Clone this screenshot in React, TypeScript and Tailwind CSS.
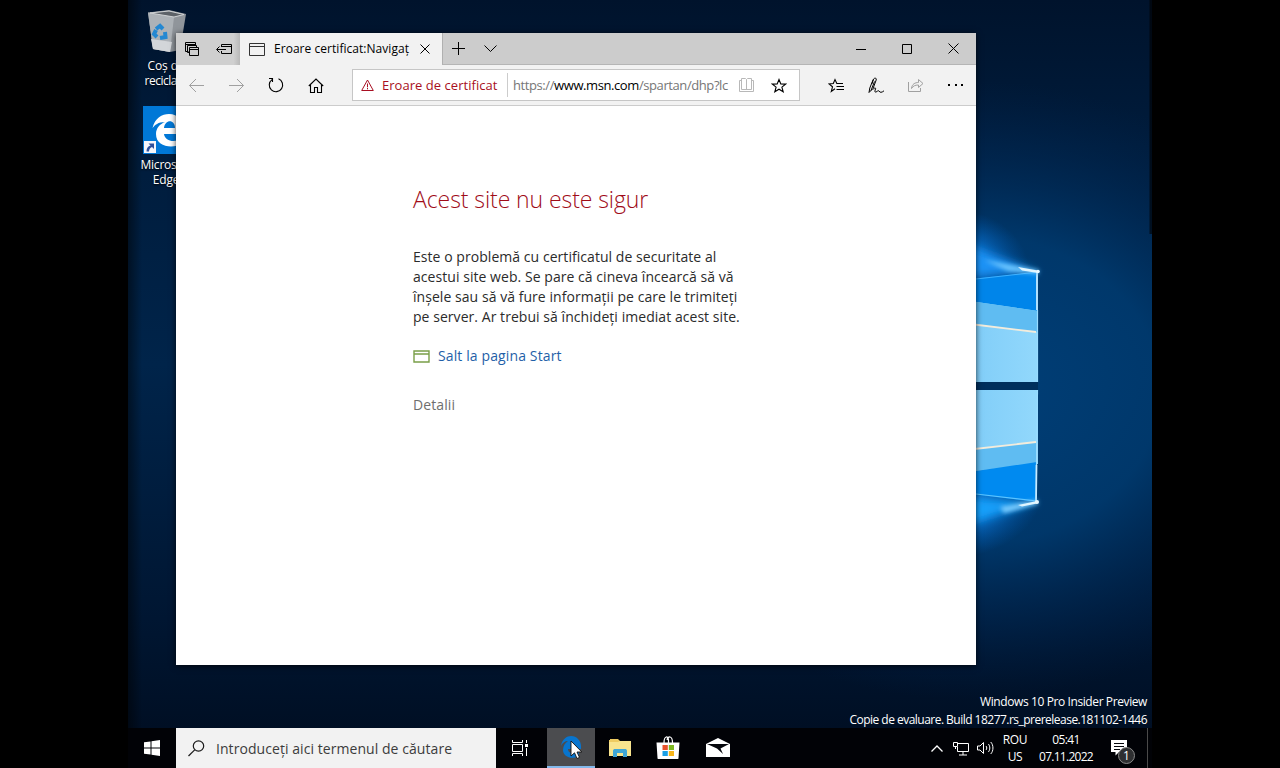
import type { ReactNode } from 'react'

function Wallpaper() {
  return (
    <svg className="absolute inset-0" width="1024" height="728" viewBox="128 0 1024 728">
      <defs>
        <linearGradient id="base" x1="0" y1="0" x2="0" y2="1">
          <stop offset="0" stopColor="#00132c" />
          <stop offset="0.2" stopColor="#001c3c" />
          <stop offset="0.5" stopColor="#00244a" />
          <stop offset="0.85" stopColor="#001632" />
          <stop offset="1" stopColor="#000f24" />
        </linearGradient>
        <radialGradient id="glow" gradientUnits="userSpaceOnUse" cx="0" cy="0" r="1" gradientTransform="translate(970 390) scale(380 310)">
          <stop offset="0" stopColor="#003f78" />
          <stop offset="0.5" stopColor="#003c72" stopOpacity="0.85" />
          <stop offset="1" stopColor="#002450" stopOpacity="0" />
        </radialGradient>
        <radialGradient id="flare">
          <stop offset="0" stopColor="#1c9bff" />
          <stop offset="0.4" stopColor="#0a78dc" stopOpacity="0.65" />
          <stop offset="1" stopColor="#005cb8" stopOpacity="0" />
        </radialGradient>
        <linearGradient id="pane" x1="0" y1="0" x2="1" y2="0">
          <stop offset="0" stopColor="#80cdf8" />
          <stop offset="1" stopColor="#92d8fc" />
        </linearGradient>
        <linearGradient id="left" x1="0" y1="0" x2="1" y2="0">
          <stop offset="0" stopColor="#000" stopOpacity="0.8" />
          <stop offset="1" stopColor="#000" stopOpacity="0" />
        </linearGradient>
        <filter id="soft" x="-50%" y="-50%" width="200%" height="200%"><feGaussianBlur stdDeviation="5" /></filter>
        <filter id="soft2" x="-50%" y="-50%" width="200%" height="200%"><feGaussianBlur stdDeviation="2" /></filter>
      </defs>
      <rect x="128" width="1024" height="728" fill="url(#base)" />
      <rect x="128" width="1024" height="728" fill="url(#glow)" />
      <ellipse cx="968" cy="258" rx="62" ry="46" fill="url(#flare)" transform="rotate(20 968 258)" />
      <ellipse cx="968" cy="510" rx="74" ry="46" fill="url(#flare)" transform="rotate(-15 968 510)" />
      <path d="M960 244 L1038 272 L960 276Z" fill="#1a93f6" filter="url(#soft)" />
      <path d="M960 498 L1037 502 L960 526Z" fill="#15a0fb" filter="url(#soft)" />
      <path d="M970 279 L1038 272 V312 L970 302Z" fill="#0085ea" />
      <path d="M970 301 L1038 311 V382 H970Z" fill="url(#pane)" />
      <path d="M970 301 L1038 311 V332 L970 324Z" fill="#5fbcf2" />
      <path d="M970 324 L1036 332" stroke="#f3ecdc" strokeWidth="1.800" />
      <path d="M970 382 H1038 V390 H970Z" fill="#002f5c" />
      <path d="M970 390 H1038 V464 L970 472Z" fill="url(#pane)" />
      <path d="M970 449 L1036 442 V463 L970 472Z" fill="#5fbcf2" />
      <path d="M970 449.500 L1036 442" stroke="#f3ecdc" strokeWidth="1.800" />
      <path d="M970 472 L1037 462 V502 L970 494Z" fill="#008af0" />
      <path d="M976 494 L1037 501" stroke="#5cc4ff" strokeWidth="1.200" />
      <path d="M976 279 L1038 272" stroke="#3cb0ff" strokeWidth="1" />
      <path d="M1037.500 310 V382" stroke="#9adcff" strokeWidth="1.200" />
      <path d="M1037.500 390 L1036.500 465" stroke="#9adcff" strokeWidth="1.200" />
      <path d="M1037 272 V310 M1036.500 465 L1036 502" stroke="#c4eaff" strokeWidth="1.800" />
      <path d="M984 260 L1039 270 L1038 274 L1008 271Z" fill="#6cc6ff" filter="url(#soft2)" />
      <path d="M1018 267 L1038 270.500 V273 L1022 270.500Z" fill="#e0f5ff" />
      <path d="M1000 507 L1037 500 L1038 504 L1004 513Z" fill="#7accff" filter="url(#soft2)" />
      <path d="M1018 505 L1037 501 V503.500 L1022 506.500Z" fill="#e0f5ff" />
      <circle cx="1038" cy="271.500" r="1.800" fill="#e8f8ff" />
      <circle cx="1037" cy="502" r="2" fill="#e8f8ff" />
      <rect x="128" width="14" height="728" fill="url(#left)" opacity="0.600" />
      <path d="M1151 0 V234" stroke="#000" strokeWidth="3" opacity="0.600" />
    </svg>
  )
}

function Icon({ w, h, className = '', children }: { w: number; h: number; className?: string; children: ReactNode }) {
  return (
    <svg width={w} height={h} viewBox={`0 0 ${w} ${h}`} fill="none" stroke="currentColor" className={`shrink-0 ${className}`}>
      {children}
    </svg>
  )
}

function DesktopIcons() {
  return (
    <div className="absolute left-0 top-0 w-[76px] text-center text-[12px] leading-[15px] tracking-[-0.5px] text-white [text-shadow:0_1px_2px_#000]">
      <Icon w={40} h={44} className="ml-[19px] mt-[9px]">
        <path d="M1 3.500 L22 1 L39 5 L33 41 L23 43 L6 40Z" fill="#90959b" stroke="none" />
        <path d="M1 3.500 L27 8 L23 43 L6 40Z" fill="#adb2b7" stroke="none" />
        <path d="M4 30 L25 33 L23 43 L6 40Z" fill="#d3d6d9" stroke="none" />
        <path d="M3 4 L22 2 L37 5.500 L27 8Z" fill="#5d6268" stroke="#d0d3d5" strokeWidth="1" />
        <path d="M9 20 L13 17 L16 20 M18 23 L18.500 28 L13 29 M10 28 L7 25 L9 21" stroke="#2488d2" strokeWidth="4" />
      </Icon>
      <div className="mt-[5px] whitespace-nowrap">
        <span className="tracking-[-0.1px]">Coș de</span><br />reciclare
      </div>
      <Icon w={48} h={48} className="ml-[15px] mt-[18px]">
        <rect width="48" height="48" fill="#0078d7" stroke="none" />
        <path d="M9.500 22 C12 12 19 8 26 8 C35 8 41 15 41 24 V28 H21 C22 36 33 37 39 32 V38 C29 43 13 41 13 28 C13 22 17 18 22 16 C15 16 12 19 9.500 22Z M21 22 H32 C32 13 22 13 21 22Z" fill="#fff" stroke="none" fillRule="evenodd" />
        <rect x="1" y="35" width="12" height="12" fill="#f4f6fa" stroke="none" />
        <path d="M5.500 37.500 H11 V43 L9 41 C7 42 6 43 6 45.500 H3.500 C3.500 42 5 40.500 7.500 39.500Z" fill="#2c4f9c" stroke="none" />
      </Icon>
      <div className="mt-[3px] whitespace-nowrap tracking-[-0.2px]">Microsoft<br />Edge</div>
    </div>
  )
}

function TabStrip() {
  return (
    <div className="flex h-8 bg-[#cccccc] text-black">
      <div className="flex w-16 items-center bg-linear-to-r from-[#cfcfcf] from-90% to-[#b8b8b8] pl-[9px]">
        <Icon w={14} h={14}>
          <path d="M3.500 9.500 H0.500 V0.500 H10.500 V3 M0.500 2.500 H10.500 M4.500 10.500 H2.500 V3.500 H11.500 V5" />
          <path d="M4.500 5.500 H13.500 V13.500 H4.500Z M4.500 7.500 H13.500" />
        </Icon>
        <Icon w={16} h={12} className="ml-[17px]">
          <path d="M5.500 4 V1.500 H15.500 V10.500 H5.500 V8 M5.500 3.500 H15.500 M1 6.500 H10 M3.500 3.500 L0.500 6.500 L3.500 9.500" />
        </Icon>
      </div>
      <div className="flex w-[202px] items-center bg-[#f2f2f2] pl-[9px]">
        <Icon w={16} h={13} className="text-[#333]">
          <path d="M0.500 0.500 H15.500 V12.500 H0.500Z M0.500 3.500 H15.500" />
        </Icon>
        <span className="ml-[9px] w-[136px] whitespace-nowrap text-[12px] tracking-[0.04px]">Eroare certificat:Navigaț</span>
        <Icon w={10} h={10} className="ml-[10px]"><path d="M0.500 0.500 L9.500 9.500 M9.500 0.500 L0.500 9.500" /></Icon>
      </div>
      <div className="flex flex-1 items-center border-b border-l border-b-[#b5b5b5] border-l-[#b0b0b0]">
        <Icon w={13} h={13} className="ml-[9px]"><path d="M6.500 0 V13 M0 6.500 H13" /></Icon>
        <Icon w={13} h={7} className="ml-[19px]"><path d="M0.500 0.500 L6.500 6.500 L12.500 0.500" /></Icon>
        <Icon w={10} h={10} className="ml-auto"><path d="M0 5.500 H10" /></Icon>
        <Icon w={10} h={10} className="ml-9"><path d="M0.500 0.500 H9.500 V9.500 H0.500Z" /></Icon>
        <Icon w={11} h={11} className="ml-9 mr-[17px]"><path d="M0.500 0.500 L10.500 10.500 M10.500 0.500 L0.500 10.500" /></Icon>
      </div>
    </div>
  )
}

function Toolbar() {
  return (
    <div className="flex h-[41px] items-center border-b border-[#cccccc] bg-[#f2f2f2] text-black">
      <Icon w={15} h={14} className="ml-[13px] text-[#a0a0a0]"><path d="M0.500 7.500 H15 M7 1 L0.500 7.500 L7 14" /></Icon>
      <Icon w={15} h={14} className="ml-[25px] text-[#a0a0a0]"><path d="M0 7.500 H14.500 M8 1 L14.500 7.500 L8 14" /></Icon>
      <Icon w={16} h={16} className="ml-6"><path d="M10.500 1.800 A6.700 6.700 0 1 1 4 2.600 M1 1.500 H4.500 V5" strokeWidth="1.100" /></Icon>
      <Icon w={16} h={15} className="ml-6"><path d="M0.800 8 L8 1 L15.200 8 M2.500 7 V14.500 H6.500 V9.500 H9.500 V14.500 H13.500 V7" strokeWidth="1.100" /></Icon>
      <div className="ml-7 flex h-8 w-[448px] items-center border border-[#c6c6c6] bg-white">
        <Icon w={13} h={12} className="ml-2 text-[#a80f22]"><path d="M6.500 1 L12.300 11.500 H0.700Z M6.500 4.500 V8.300 M6.500 9 V10.300" /></Icon>
        <span className="ml-2 w-[125px] whitespace-nowrap pt-[2px] text-[13px] tracking-[0.04px] text-[#a80f22]">Eroare de certificat</span>
        <div className="h-6 w-px bg-[#cccccc]" />
        <span className="ml-[5px] w-[217px] whitespace-nowrap pt-[2px] text-[13px] tracking-[-0.41px] text-[#767676]">https://<span className="text-black">www.msn.com</span>/spartan/dhp?lc</span>
        <Icon w={15} h={14} className="ml-[9px] text-[#b8b8b8]"><path d="M2.500 0.500 H6.500 L7.500 1.500 L8.500 0.500 H12.500 V11.500 H2.500Z M7.500 1.500 V11.500 M2 2.500 H0.500 V13.500 H14.500 V2.500 H13" /></Icon>
        <Icon w={16} h={15} className="ml-[17px]"><path d="M8 1.500 L9.800 5.900 L14.600 6.100 L10.900 9.100 L12.200 13.800 L8 11.200 L3.800 13.800 L5.100 9.100 L1.400 6.100 L6.200 5.900Z" strokeWidth="1.100" /></Icon>
      </div>
      <Icon w={16} h={15} className="ml-7"><path d="M15 5.500 H8.800 L7 1.500 L5.300 5.500 L1 5.900 L4.500 8.800 L3.300 13.500 L7 10.800 M8.500 8.500 H16 M8.500 11.500 H16" strokeWidth="1.100" /></Icon>
      <Icon w={17} h={17} className="ml-6"><path d="M1 15.500 L1.800 11 L5 3 C6 0.500 8.800 0.500 8.200 3 L5 11.500 L1 15.500 M3.800 7 L5.500 2.500 M3 13.500 L6.500 4.500 M5 12.500 C6.500 10.500 8 10.500 7.500 12 C6.800 14 6.500 15.500 8 15 C9.500 14.500 10 13 11 14 C12 15.800 13.500 15.800 16 13.800" /></Icon>
      <Icon w={16} h={15} className="ml-[23px] text-[#a0a0a0]"><path d="M0.500 4 V13.500 H12.500 V10 M3.500 10.500 C4 6 7 4.500 10.500 4.500 V1.500 L15 5.500 L10.500 9.500 V7 C7 7 5 8 3.500 10.500Z" /></Icon>
      <Icon w={16} h={2} className="ml-6"><path d="M0 1 H2 M7 1 H9 M13 1 H15" strokeWidth="1.800" /></Icon>
    </div>
  )
}

function EdgeWindow() {
  return (
    <div className="absolute left-[48px] top-[33px] flex h-[632px] w-[800px] flex-col bg-white shadow-[0_1px_6px_rgba(0,0,0,0.75)]">
      <TabStrip />
      <Toolbar />
      <div className="pl-[237px] pt-[76px]">
        <h1 className="whitespace-nowrap text-[23px] font-light leading-[34px] tracking-[-0.08px] text-[#a00c18]">Acest site nu este sigur</h1>
        <p className="mt-[31px] whitespace-nowrap text-[14px] leading-5 tracking-[0.05px] text-[#2b2b2b]">
          Este o problemă cu certificatul de securitate al<br />
          acestui site web. Se pare că cineva încearcă să vă<br />
          înșele sau să vă fure informații pe care le trimiteți<br />
          pe server. Ar trebui să închideți imediat acest site.
        </p>
        <div className="mt-[18px] flex h-5 items-center text-[14px] tracking-[0.12px] text-[#1f5fa8]">
          <Icon w={17} h={13} className="mt-[3px] text-[#7a9f48]"><path d="M1 1 H16 V12 H1Z M1 4 H16" strokeWidth="1.400" /></Icon>
          <span className="ml-2">Salt la pagina Start</span>
        </div>
        <div className="mt-[30px] text-[14px] leading-5 tracking-[0.1px] text-[#6e6e6e]">Detalii</div>
      </div>
    </div>
  )
}

function Taskbar() {
  return (
    <div className="absolute bottom-0 left-0 flex h-10 w-[1024px] items-center bg-[#010206] text-white">
      <Icon w={16} h={16} className="ml-4 mr-4">
        <path d="M0 2.300 L6.500 1.400 V7.500 H0Z M7.500 1.200 L16 0 V7.500 H7.500Z M0 8.500 H6.500 V14.600 L0 13.700Z M7.500 8.500 H16 V16 L7.500 14.800Z" fill="#fff" stroke="none" />
      </Icon>
      <div className="flex h-10 w-80 items-center bg-[#f2f2f2] pl-3 text-[#3c3c3c]">
        <Icon w={17} h={17} className="text-[#1a1a1a]"><circle cx="10.500" cy="6" r="5.200" strokeWidth="1.200" /><path d="M6.700 9.800 L0.500 16" strokeWidth="1.200" /></Icon>
        <span className="ml-[11px] whitespace-nowrap text-[14px] tracking-[0.06px]">Introduceți aici termenul de căutare</span>
      </div>
      <Icon w={16} h={16} className="ml-4">
        <path d="M0.500 0 V2.500 H10.500 V0 M0.500 4.500 H10.500 V11.500 H0.500Z M0.500 16 V13.500 H10.500 V16 M14.500 0 V3 M14.500 8 V16" />
        <rect x="13" y="4" width="3" height="3" fill="#fff" stroke="none" />
      </Icon>
      <div className="relative ml-[19px] flex h-10 w-12 items-center justify-center border-b-2 border-[#83b9ec] bg-[#4b4c4f]">
        <Icon w={20} h={22}>
          <path d="M0 10 C1 3 6 0 10 0 C16 0 20 5 20 10 V13 H7 C7 18 14 18 18 16 V20 C11 24 2 21 2 14 C2 10 4 7 7 5 C4 5 1 7 0 10Z" fill="#0875ce" stroke="none" />
        </Icon>
        <Icon w={13} h={20} className="absolute left-[23px] top-[12px]">
          <path d="M1 1 V16 L4.500 12.800 L7 18.500 L9.500 17.400 L7 12 H11.800Z" fill="#fff" stroke="#111" strokeWidth="0.900" />
        </Icon>
      </div>
      <Icon w={22} h={20} className="ml-[14px]">
        <path d="M0 2 H1 V1 H9 L11 3 H21 V18 H0Z" fill="#eecb61" stroke="none" />
        <path d="M0 4 H9 L11 3 H22 V18 H0Z" fill="#f8e48e" stroke="none" />
        <path d="M4 19 V13 C4 11.500 5 11 6 11 H16 C17 11 18 11.500 18 13 V19 H14 V15 H8 V19Z" fill="#3fa6d6" stroke="none" />
      </Icon>
      <Icon w={24} h={24} className="ml-[25px]">
        <path d="M8 7 C8 -1 12.500 0 12.500 4 V7 M11 4 C12 0 16.500 -1 16.500 7" strokeWidth="1.200" />
        <path d="M0.500 6.500 H23.500 L22.500 22 C22.500 23 22 23 21 23 H3 C2 23 1.500 23 1.500 22Z" fill="#fff" stroke="none" />
        <path d="M6.500 9 H11.800 V14 H6.500Z" fill="#e8522c" stroke="none" />
        <path d="M12.800 9 H18 V14 H12.800Z" fill="#7db820" stroke="none" />
        <path d="M6.500 15 H11.800 V20 H6.500Z" fill="#1a9fe6" stroke="none" />
        <path d="M12.800 15 H18 V20 H12.800Z" fill="#f9b61a" stroke="none" />
      </Icon>
      <Icon w={24} h={20} className="ml-[26px]">
        <path d="M0 6 L12 0 L24 6 V19 H0Z" fill="#fff" stroke="none" />
        <path d="M1 6 H23 L14.500 10.500 L17 16 L11 10.500Z" fill="#05070c" stroke="none" />
      </Icon>
      <div className="ml-auto flex h-10 items-center border-r border-[#4a4a4a]">
        <Icon w={12} h={7}><path d="M0.500 6.500 L6 1 L11.500 6.500" strokeWidth="1.300" /></Icon>
        <Icon w={17} h={15} className="ml-[10px]"><path d="M5 2.500 H15.500 V10.500 H4.500 V6 M10 11 V14 M6 14 H14 M0.500 1.500 H4.500 V5.500 H0.500Z M2.500 6 V8" /></Icon>
        <Icon w={17} h={14} className="ml-[7px]">
          <path d="M0.500 5 H3 L6.500 1.500 V12.500 L3 9 H0.500Z M9 5 C10 6 10 8 9 9 M11.300 3 C13.300 5 13.300 9 11.300 11 M13.700 1 C16.700 4 16.700 10 13.700 13" />
        </Icon>
        <div className="ml-[7px] w-7 text-center text-[12px] leading-[17px] tracking-[-0.3px]">ROU<br />US</div>
        <div className="ml-[8px] w-[58px] whitespace-nowrap text-center text-[12px] leading-[17px] tracking-[-0.72px]">
          <span className="tracking-[-0.6px]">05:41</span><br />07.11.2022
        </div>
        <div className="relative ml-[16px] mr-[20px]">
          <Icon w={16} h={16}>
            <path d="M0 0 H16 V12 H8 L4.500 15.500 V12 H0Z" fill="#fff" stroke="none" />
            <path d="M3 3.500 H13 M3 6.500 H13 M3 9.500 H9" stroke="#05070c" />
          </Icon>
          <div className="absolute left-[7px] top-[7px] flex size-[17px] items-center justify-center rounded-full border border-[#8a8a8a] bg-[#2e2f31] text-[12px]">1</div>
        </div>
      </div>
      <div className="w-1" />
    </div>
  )
}

export default function App() {
  return (
    <div className="flex h-[768px] w-[1280px] justify-center overflow-hidden bg-black font-['Open_Sans',sans-serif]">
      <div className="relative h-[768px] w-[1024px] overflow-hidden">
        <Wallpaper />
        <DesktopIcons />
        <div className="absolute right-[5px] top-[693px] whitespace-nowrap text-right text-[12px] leading-[18px] tracking-[-0.52px] text-white">
          <span className="tracking-[-0.4px]">Windows 10 Pro Insider Preview</span><br />
          Copie de evaluare. Build 18277.rs_prerelease.181102-1446
        </div>
        <EdgeWindow />
        <Taskbar />
      </div>
    </div>
  )
}
